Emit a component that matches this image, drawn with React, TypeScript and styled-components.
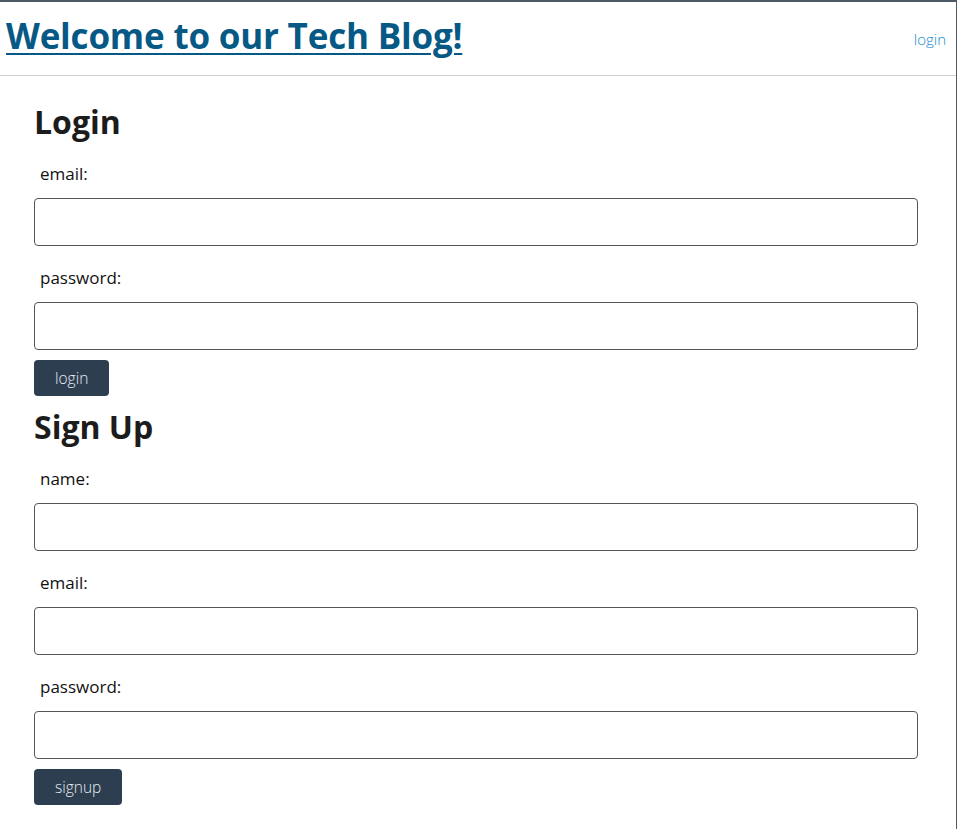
import React from "react";
import styled, { createGlobalStyle } from "styled-components";

const GlobalStyle = createGlobalStyle`
  html, body {
    margin: 0;
    padding: 0;
    background: #ffffff;
  }
  body {
    font-family: "Open Sans", "Noto Sans", sans-serif;
    color: #111;
  }
  * {
    box-sizing: border-box;
  }
`;

const PageFrame = styled.div`
  min-height: 100vh;
  border-top: 2px solid #4d5966;
  border-right: 1px solid #4d5966;
`;

const Header = styled.header`
  height: 74px;
  display: flex;
  justify-content: space-between;
  align-items: center;
  padding: 0 10px 0 6px;
  border-bottom: 1px solid #cfcfcf;
`;

const Title = styled.a`
  font-size: 35px;
  font-weight: 700;
  color: #075985;
  text-decoration: underline;
  text-underline-offset: 4px;
  text-decoration-thickness: 2px;
  letter-spacing: -0.2px;
  margin-bottom: 6px;
`;

const NavLink = styled.a`
  font-size: 15px;
  font-weight: 300;
  color: #1a8ccc;
  text-decoration: none;
`;

const Main = styled.main`
  padding: 27px 38px 24px 34px;
`;

const Section = styled.section<{ $gap?: number }>`
  margin-top: ${(p) => p.$gap ?? 0}px;
  display: flex;
  flex-direction: column;
  align-items: flex-start;
`;

const Heading = styled.h2`
  margin: 0 0 21px;
  font-size: 32px;
  line-height: 38px;
  font-weight: 700;
  color: #1c1c1c;
`;

const Field = styled.div`
  width: 100%;
  display: flex;
  flex-direction: column;
  & + & {
    margin-top: 20px;
  }
`;

const Label = styled.label`
  font-size: 17px;
  line-height: 24px;
  padding-left: 6px;
  margin-bottom: 12px;
  color: #111;
`;

const Input = styled.input`
  width: 100%;
  height: 48px;
  border: 1px solid #555;
  border-radius: 4px;
  padding: 0 10px;
  font-size: 16px;
  font-family: inherit;
  background: #fff;
`;

const SubmitButton = styled.button`
  margin-top: 10px;
  height: 36px;
  padding: 0 21px;
  border: none;
  border-radius: 4px;
  background: #2d3e50;
  color: #e6edf2;
  font-family: inherit;
  font-size: 15.5px;
  font-weight: 300;
  cursor: pointer;
`;

const FormField: React.FC<{ label: string; id: string; type?: string }> = ({
  label,
  id,
  type = "text",
}) => (
  <Field>
    <Label htmlFor={id}>{label}</Label>
    <Input id={id} type={type} />
  </Field>
);

const App: React.FC = () => {
  return (
    <PageFrame>
      <GlobalStyle />
      <Header>
        <Title href="#">Welcome to our Tech Blog!</Title>
        <NavLink href="#">login</NavLink>
      </Header>
      <Main>
        <Section>
          <Heading>Login</Heading>
          <FormField label="email:" id="email-login" type="email" />
          <FormField label="password:" id="password-login" type="password" />
          <SubmitButton type="button">login</SubmitButton>
        </Section>
        <Section $gap={12}>
          <Heading>Sign Up</Heading>
          <FormField label="name:" id="name-signup" />
          <FormField label="email:" id="email-signup" type="email" />
          <FormField label="password:" id="password-signup" type="password" />
          <SubmitButton type="button">signup</SubmitButton>
        </Section>
      </Main>
    </PageFrame>
  );
};

export default App;
